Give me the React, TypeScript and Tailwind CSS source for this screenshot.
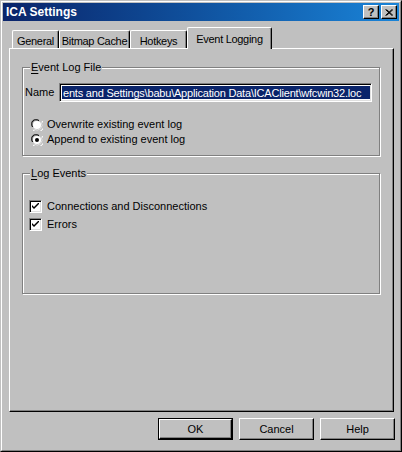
import React from 'react'

const font = { fontFamily: '"Liberation Sans", Arial, sans-serif' }

function Tab({ label, width, selected }: { label: string; width: string; selected?: boolean }) {
  if (selected) {
    return (
      <div
        className={`${width} shrink-0 whitespace-nowrap tracking-[-0.3px] relative z-10 -mb-px h-[22px] flex items-start justify-center pt-[3px] bg-[#c0c0c0] border-t border-l border-white rounded-tl-[2px] rounded-tr-[2px] border-r border-r-black shadow-[inset_-1px_0_0_#808080]`}
      >
        {label}
      </div>
    )
  }
  return (
    <div
      className={`${width} shrink-0 whitespace-nowrap tracking-[-0.3px] h-[18px] flex items-start justify-center pt-[2px] border-t border-l border-white rounded-tl-[2px] rounded-tr-[2px] border-r border-r-black shadow-[inset_-1px_0_0_#808080]`}
    >
      {label}
    </div>
  )
}

function GroupBox({
  label,
  accel,
  className,
  children,
}: {
  label: string
  accel: string
  className: string
  children: React.ReactNode
}) {
  return (
    <div
      className={`relative ml-[12px] w-[358px] border border-[#808080] shadow-[inset_1px_1px_0_#ffffff,1px_1px_0_#ffffff] ${className}`}
    >
      <span className="absolute left-[7px] -top-[8px] px-[1px] bg-[#c0c0c0] leading-[14px] whitespace-nowrap">
        <span className="underline underline-offset-[2px]">{accel}</span>
        {label}
      </span>
      {children}
    </div>
  )
}

function Radio({ checked, label }: { checked?: boolean; label: string }) {
  return (
    <div className="flex items-center h-[15px] pl-[8px]">
      <svg width="12" height="12" viewBox="0 0 12 12" className="shrink-0">
        <path d="M1 8 A5 5 0 0 1 8 1" stroke="#808080" strokeWidth="1" fill="none" />
        <path d="M2 8 A4 4 0 0 1 8 2" stroke="#000000" strokeWidth="1" fill="none" />
        <circle cx="6" cy="6" r="4" fill="#ffffff" />
        <path d="M3 10 A5 5 0 0 0 10 3" stroke="#dfdfdf" strokeWidth="1" fill="none" />
        <path d="M2 11 A6 6 0 0 0 11 2" stroke="#ffffff" strokeWidth="1" fill="none" />
        {checked && <circle cx="6" cy="6" r="2" fill="#000000" />}
      </svg>
      <span className="ml-[4px]">{label}</span>
    </div>
  )
}

function Check({ label }: { label: string }) {
  return (
    <div className="flex items-center h-[18px] pl-[6px]">
      <div className="w-[13px] h-[13px] shrink-0 bg-white border-t border-l border-[#808080] border-r border-b border-r-white border-b-white shadow-[inset_1px_1px_0_#000000,inset_-1px_-1px_0_#dfdfdf] flex items-center justify-center">
        <svg width="7" height="7" viewBox="0 0 7 7">
          <path d="M0 2 L0 4 L2 6 L7 1 L7 -1 L2 4 Z" fill="#000000" />
        </svg>
      </div>
      <span className="ml-[5px]">{label}</span>
    </div>
  )
}

function Button({ label, isDefault }: { label: string; isDefault?: boolean }) {
  return (
    <div
      className={`w-[75px] h-[22px] flex items-center justify-center ${
        isDefault ? 'border border-black' : ''
      }`}
    >
      <div className="w-full h-full flex items-center justify-center border-t border-l border-white border-r border-b border-r-black border-b-black shadow-[inset_-1px_-1px_0_#808080]">
        {label}
      </div>
    </div>
  )
}

export default function App() {
  return (
    <div
      className="w-[402px] h-[452px] bg-[#c0c0c0] text-[11px] text-black border-t border-l border-[#c0c0c0] border-r border-b border-r-black border-b-black"
      style={font}
    >
      <div className="w-full h-full border-t border-l border-white border-r border-b border-r-[#808080] border-b-[#808080] flex flex-col">
        {/* title bar */}
        <div className="mx-px mt-px h-[18px] bg-gradient-to-r from-[#0a246a] to-[#1a84d8] flex items-center justify-between pl-[3px] pr-[2px]">
          <span className="text-white font-bold text-[12px] leading-none">ICA Settings</span>
          <div className="flex gap-[2px]">
            <div className="w-[16px] h-[14px] bg-[#c0c0c0] border-t border-l border-white border-r border-b border-r-black border-b-black shadow-[inset_-1px_-1px_0_#808080] flex items-center justify-center font-bold text-[11px] leading-none">
              ?
            </div>
            <div className="w-[16px] h-[14px] bg-[#c0c0c0] border-t border-l border-white border-r border-b border-r-black border-b-black shadow-[inset_-1px_-1px_0_#808080] flex items-center justify-center">
              <svg width="8" height="7" viewBox="0 0 8 7">
                <path d="M0.5 0.5 L7 6.5 M1.5 0.5 L8 6.5 M7 0.5 L0.5 6.5 M8 0.5 L1.5 6.5" stroke="#000" strokeWidth="1" />
              </svg>
            </div>
          </div>
        </div>

        {/* tabs */}
        <div className="mt-[6px] h-[21px] flex items-end pl-[10px]">
          <Tab label="General" width="w-[47px]" />
          <Tab label="Bitmap Cache" width="w-[71px]" />
          <Tab label="Hotkeys" width="w-[57px]" />
          <Tab label="Event Logging" width="w-[85px]" selected />
        </div>

        {/* panel */}
        <div className="ml-[7px] w-[385px] h-[364px] border-t border-l border-white border-r border-b border-r-black border-b-black shadow-[inset_-1px_-1px_0_#808080] flex flex-col">
          <GroupBox label="vent Log File" accel="E" className="mt-[18px] h-[89px]">
            <div className="pt-[15px] pl-[2px] flex items-center">
              <span className="w-[34px]">Name</span>
              <div className="w-[313px] h-[19px] bg-white border-t border-l border-[#808080] border-r border-b border-r-white border-b-white shadow-[inset_1px_1px_0_#000000,inset_-1px_-1px_0_#dfdfdf] pl-[2px] pr-[1px] py-[2px] overflow-hidden">
                <div className="h-full bg-[#0a246a] text-white whitespace-nowrap overflow-hidden leading-[14px] pl-px tracking-[-0.2px]">
                  ents and Settings\babu\Application Data\ICAClient\wfcwin32.loc
                </div>
              </div>
            </div>
            <div className="mt-[15px] flex flex-col">
              <Radio label="Overwrite existing event log" />
              <Radio label="Append to existing event log" checked />
            </div>
          </GroupBox>

          <GroupBox label="og Events" accel="L" className="mt-[17px] h-[121px]">
            <div className="pt-[23px] flex flex-col">
              <Check label="Connections and Disconnections" />
              <Check label="Errors" />
            </div>
          </GroupBox>
        </div>

        {/* buttons */}
        <div className="mt-[6px] flex justify-end gap-[6px] pr-[5px]">
          <Button label="OK" isDefault />
          <Button label="Cancel" />
          <Button label="Help" />
        </div>
      </div>
    </div>
  )
}
